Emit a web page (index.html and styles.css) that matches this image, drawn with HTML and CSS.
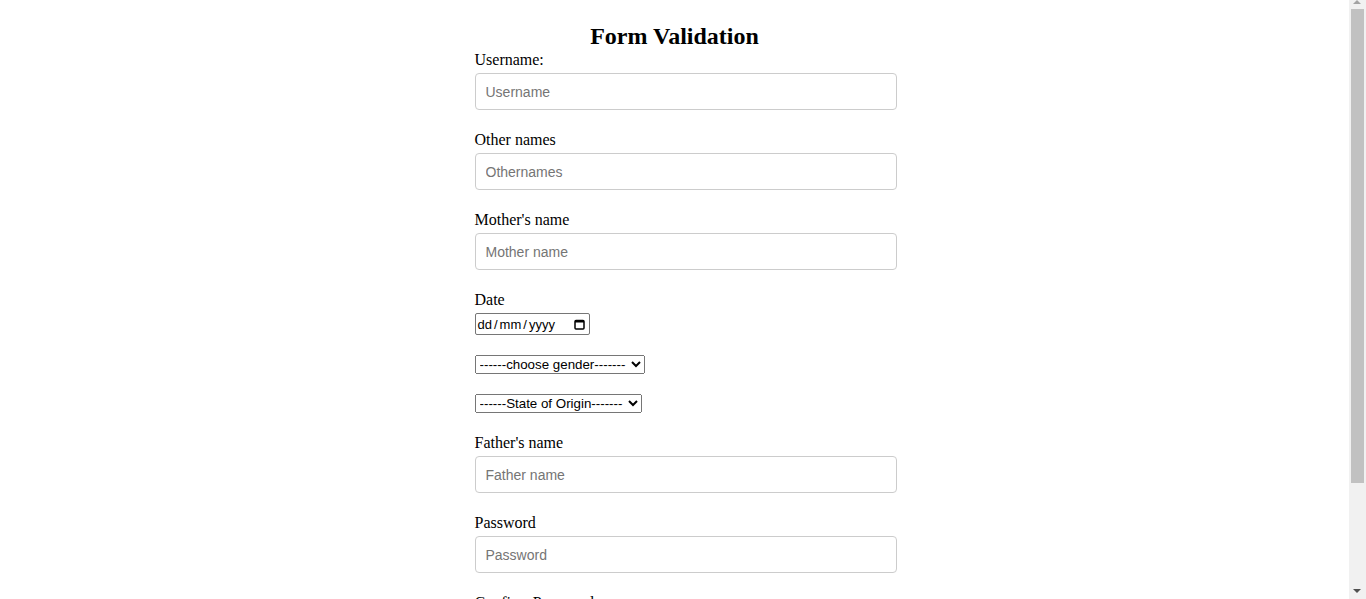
FILE: index.html
```html
<!DOCTYPE html>
<html lang="en">
<head>
<meta charset="utf-8">
<title>Form Validation</title>
<link rel="stylesheet" href="styles.css">
</head>
<body>
<form class="form">
  <h2 class="title">Form Validation</h2>
  <div class="group">
    <label class="label" for="username">Username:</label>
    <input class="field" id="username" type="text" placeholder="Username">
  </div>
  <div class="group">
    <label class="label" for="othernames">Other names</label>
    <input class="field" id="othernames" type="text" placeholder="Othernames">
  </div>
  <div class="group">
    <label class="label" for="mother">Mother's name</label>
    <input class="field" id="mother" type="text" placeholder="Mother name">
  </div>
  <div class="group group-tight">
    <label class="label" for="date">Date</label>
    <div class="date" id="date" tabindex="0">
      <span class="date-text"><span>dd</span><span class="sep">/</span><span>mm</span><span class="sep">/</span><span>yyyy</span></span>
      <svg class="cal" width="11" height="11" viewBox="0 0 11 11" aria-hidden="true">
        <rect x="1" y="1.5" width="9" height="8.5" rx="1" fill="none" stroke="#000" stroke-width="1.5"/>
        <rect x="1" y="1" width="9" height="2.5" fill="#000"/>
      </svg>
    </div>
  </div>
  <div class="group group-tight">
    <select class="select select-gender">
      <option>------choose gender-------</option>
      <option>Male</option>
      <option>Female</option>
    </select>
  </div>
  <div class="group">
    <select class="select select-state">
      <option>------State of Origin-------</option>
      <option>Lagos</option>
      <option>Abuja</option>
    </select>
  </div>
  <div class="group">
    <label class="label" for="father">Father's name</label>
    <input class="field" id="father" type="text" placeholder="Father name">
  </div>
  <div class="group">
    <label class="label" for="password">Password</label>
    <input class="field" id="password" type="password" placeholder="Password">
  </div>
  <div class="group">
    <label class="label" for="confirm">Confirm Password</label>
    <input class="field" id="confirm" type="password" placeholder="Confirm Password">
  </div>
  <div class="group">
    <button class="submit" type="submit">Submit</button>
  </div>
</form>
<div class="scrollbar" aria-hidden="true">
  <div class="arrow-up"></div>
  <div class="thumb"></div>
  <div class="arrow-down"></div>
</div>
</body>
</html>
```
FILE: styles.css
```css
html {
  background: #fff;
  padding-right: 17px;
}
body {
  margin: 8px;
  font-family: "Liberation Serif", "Times New Roman", serif;
  font-size: 16px;
  color: #000;
}
.form {
  width: 400px;
  margin: 0 auto;
}
.title {
  font-size: 24px;
  font-weight: bold;
  text-align: center;
  margin: 13px 0 0;
  line-height: 30px;
}
.group {
  margin-bottom: 21px;
}
.group-tight {
  margin-bottom: 20px;
}
.label {
  display: block;
  line-height: 18px;
  margin-bottom: 4px;
}
.field {
  display: block;
  width: 400px;
  padding: 0 10px;
  box-sizing: content-box;
  height: 35px;
  border: 1px solid #ccc;
  border-radius: 4px;
  font-family: "Liberation Sans", Arial, sans-serif;
  font-size: 14px;
  color: #000;
  margin: 0;
  outline: none;
}
.field::placeholder {
  color: #757575;
}
.date {
  display: flex;
  align-items: center;
  justify-content: space-between;
  box-sizing: border-box;
  width: 115px;
  height: 22px;
  padding: 0 4px 0 2px;
  border: 1px solid #767676;
  border-radius: 2px;
  font-family: "Liberation Sans", Arial, sans-serif;
  font-size: 13px;
  color: #000;
}
.date-text {
  display: flex;
}
.sep {
  margin: 0 2px;
}
.cal {
  display: block;
}
.select {
  display: block;
  margin: 0;
  height: 19px;
  font-family: "Liberation Sans", Arial, sans-serif;
  font-size: 13.33px;
  color: #000;
}
.select-gender {
  width: 170px;
}
.select-state {
  width: 167px;
}
.submit {
  font-family: "Liberation Sans", Arial, sans-serif;
  font-size: 13.33px;
}
.scrollbar {
  position: fixed;
  top: 0;
  right: 0;
  width: 17px;
  height: 100%;
  background: #f1f1f1;
}
.arrow-up {
  position: absolute;
  top: 0;
  left: 4px;
  width: 0;
  height: 0;
  border-left: 4px solid transparent;
  border-right: 4px solid transparent;
  border-bottom: 4px solid #a3a3a3;
}
.thumb {
  position: absolute;
  top: 9px;
  left: 2px;
  width: 13px;
  height: 474px;
  background: #c1c1c1;
}
.arrow-down {
  position: absolute;
  bottom: 6px;
  left: 4px;
  width: 0;
  height: 0;
  border-left: 4px solid transparent;
  border-right: 4px solid transparent;
  border-top: 4px solid #505050;
}
```
